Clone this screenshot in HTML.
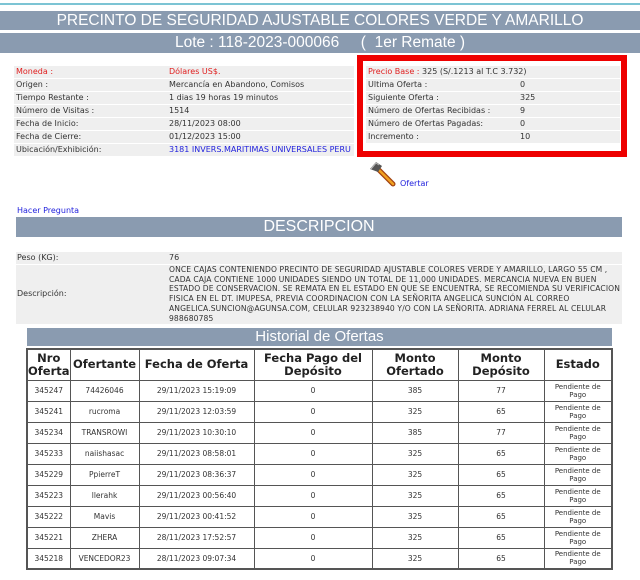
<!DOCTYPE html>
<html><head><meta charset="utf-8"><style>
*{margin:0;padding:0;box-sizing:border-box}
body{width:640px;height:580px;background:#fff;position:relative;overflow:hidden;font-family:"DejaVu Sans","Liberation Sans",sans-serif;font-size:8px;color:#333}
.a{position:absolute}
.bar{position:absolute;background:#8a9bb0;color:#fff;text-align:center;font-family:"Liberation Sans",sans-serif}
.row{position:absolute;height:12px;background:#efefef;line-height:12px;white-space:nowrap}
.row > span{position:absolute;top:0}
.red{color:#e02020}
.blue{color:#2222dd}
table{position:absolute;left:26px;top:348px;width:587px;border-collapse:collapse;border:2px solid #555}
td,th{border:1px solid #555;text-align:center;height:21px;font-size:7.5px;color:#333;padding:0}
th{font-size:11.5px;font-weight:bold;color:#222;height:31px;line-height:13px}
td.e{font-size:7px;line-height:8px}
</style></head><body>
<div class="a" style="left:0;top:3px;width:640px;height:2px;background:#7cc4d4"></div>
<div class="bar" style="left:0;top:11px;width:640px;height:19px;font-size:15.5px;line-height:19px">PRECINTO DE SEGURIDAD AJUSTABLE COLORES VERDE Y AMARILLO</div>
<div class="bar" style="left:0;top:33px;width:640px;height:20px;font-size:15.5px;line-height:20px">Lote : 118-2023-000066 &nbsp;&nbsp;&nbsp; ( &nbsp;1er Remate )</div>

<div class="row" style="left:14px;top:66px;width:340px"><span class="red" style="left:2px">Moneda :</span><span class="red" style="left:155px">Dólares US$.</span></div>
<div class="row" style="left:14px;top:79px;width:340px"><span style="left:2px">Origen :</span><span style="left:155px">Mercancía en Abandono, Comisos</span></div>
<div class="row" style="left:14px;top:92px;width:340px"><span style="left:2px">Tiempo Restante :</span><span style="left:155px">1 dias 19 horas 19 minutos</span></div>
<div class="row" style="left:14px;top:105px;width:340px"><span style="left:2px">Número de Visitas :</span><span style="left:155px">1514</span></div>
<div class="row" style="left:14px;top:118px;width:340px"><span style="left:2px">Fecha de Inicio:</span><span style="left:155px">28/11/2023 08:00</span></div>
<div class="row" style="left:14px;top:131px;width:340px"><span style="left:2px">Fecha de Cierre:</span><span style="left:155px">01/12/2023 15:00</span></div>
<div class="row" style="left:14px;top:144px;width:340px"><span style="left:2px">Ubicación/Exhibición:</span><span class="blue" style="left:155px">3181 INVERS.MARITIMAS UNIVERSALES PERU</span></div>

<div class="a" style="left:357px;top:55px;width:270px;height:102px;border:6px solid #ee0000;background:#fff"></div>
<div class="row" style="left:366px;top:66px;width:254px"><span style="left:2px"><b class="red" style="font-weight:normal">Precio Base :</b> 325 (S/.1213 al T.C 3.732)</span></div>
<div class="row" style="left:366px;top:79px;width:254px"><span style="left:2px">Ultima Oferta :</span><span style="left:154px">0</span></div>
<div class="row" style="left:366px;top:92px;width:254px"><span style="left:2px">Siguiente Oferta :</span><span style="left:154px">325</span></div>
<div class="row" style="left:366px;top:105px;width:254px"><span style="left:2px">Número de Ofertas Recibidas :</span><span style="left:154px">9</span></div>
<div class="row" style="left:366px;top:118px;width:254px"><span style="left:2px">Número de Ofertas Pagadas:</span><span style="left:154px">0</span></div>
<div class="row" style="left:366px;top:131px;width:254px"><span style="left:2px">Incremento :</span><span style="left:154px">10</span></div>

<svg class="a" style="left:368px;top:160px" width="30" height="28" viewBox="0 0 30 28">
<path d="M9 8 L25 24" stroke="#a04010" stroke-width="5" stroke-linecap="round"/>
<path d="M9 8 L25 24" stroke="#f0a020" stroke-width="2.5" stroke-linecap="round"/>
<path d="M2 9 L8 2 L14 6 L10 12 Z" fill="#555"/>
<path d="M3 9 L8 3 L11 5" stroke="#bbb" stroke-width="1" fill="none"/>
</svg>
<div class="a blue" style="left:400px;top:179px">Ofertar</div>
<div class="a blue" style="left:17px;top:206px">Hacer Pregunta</div>

<div class="bar" style="left:16px;top:217px;width:606px;height:20px;font-size:16px;line-height:20px">DESCRIPCION</div>
<div class="row" style="left:16px;top:252px;width:606px"><span style="left:1px">Peso (KG):</span><span style="left:153px">76</span></div>
<div class="a" style="left:16px;top:265px;width:606px;height:59px;background:#efefef;line-height:10px">
<span class="a" style="left:1px;top:24px">Descripción:</span>
<div class="a" style="left:153px;top:0;width:452px;font-size:7.6px;line-height:9.7px;letter-spacing:0.1px">ONCE CAJAS CONTENIENDO PRECINTO DE SEGURIDAD AJUSTABLE COLORES VERDE Y AMARILLO, LARGO 55 CM , CADA CAJA CONTIENE 1000 UNIDADES SIENDO UN TOTAL DE 11,000 UNIDADES. MERCANCIA NUEVA EN BUEN ESTADO DE CONSERVACION. SE REMATA EN EL ESTADO EN QUE SE ENCUENTRA, SE RECOMIENDA SU VERIFICACION FISICA EN EL DT. IMUPESA, PREVIA COORDINACION CON LA SEÑORITA ANGELICA SUNCIÓN AL CORREO ANGELICA.SUNCION@AGUNSA.COM, CELULAR 923238940 Y/O CON LA SEÑORITA. ADRIANA FERREL AL CELULAR 988680785</div>
</div>

<div class="bar" style="left:27px;top:328px;width:585px;height:18px;font-size:15px;line-height:18px">Historial de Ofertas</div>
<table>
<tr><th style="width:42px">Nro<br>Oferta</th><th style="width:69px">Ofertante</th><th style="width:115px">Fecha de Oferta</th><th style="width:118px">Fecha Pago del<br>Depósito</th><th style="width:86px">Monto<br>Ofertado</th><th style="width:86px">Monto<br>Depósito</th><th>Estado</th></tr>
<tr><td>345247</td><td>74426046</td><td>29/11/2023 15:19:09</td><td>0</td><td>385</td><td>77</td><td class="e">Pendiente de<br>Pago</td></tr>
<tr><td>345241</td><td>rucroma</td><td>29/11/2023 12:03:59</td><td>0</td><td>325</td><td>65</td><td class="e">Pendiente de<br>Pago</td></tr>
<tr><td>345234</td><td>TRANSROWI</td><td>29/11/2023 10:30:10</td><td>0</td><td>385</td><td>77</td><td class="e">Pendiente de<br>Pago</td></tr>
<tr><td>345233</td><td>naiishasac</td><td>29/11/2023 08:58:01</td><td>0</td><td>325</td><td>65</td><td class="e">Pendiente de<br>Pago</td></tr>
<tr><td>345229</td><td>PpierreT</td><td>29/11/2023 08:36:37</td><td>0</td><td>325</td><td>65</td><td class="e">Pendiente de<br>Pago</td></tr>
<tr><td>345223</td><td>llerahk</td><td>29/11/2023 00:56:40</td><td>0</td><td>325</td><td>65</td><td class="e">Pendiente de<br>Pago</td></tr>
<tr><td>345222</td><td>Mavis</td><td>29/11/2023 00:41:52</td><td>0</td><td>325</td><td>65</td><td class="e">Pendiente de<br>Pago</td></tr>
<tr><td>345221</td><td>ZHERA</td><td>28/11/2023 17:52:57</td><td>0</td><td>325</td><td>65</td><td class="e">Pendiente de<br>Pago</td></tr>
<tr><td>345218</td><td>VENCEDOR23</td><td>28/11/2023 09:07:34</td><td>0</td><td>325</td><td>65</td><td class="e">Pendiente de<br>Pago</td></tr>
</table>
</body></html>
